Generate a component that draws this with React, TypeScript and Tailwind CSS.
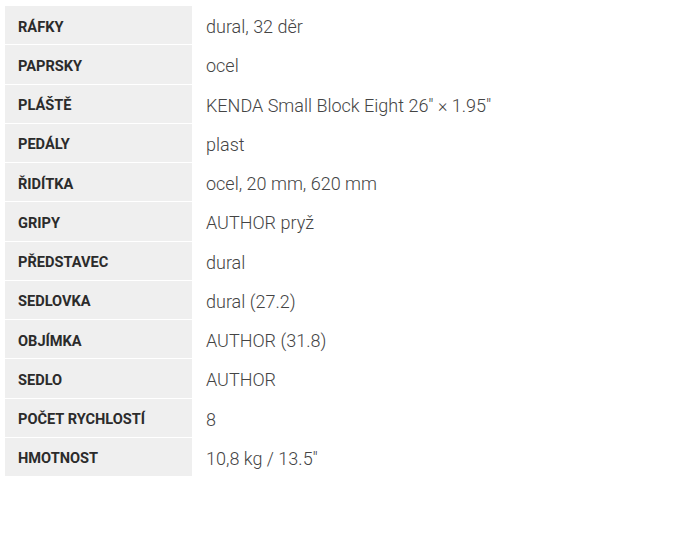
const specs: Array<[string, string]> = [
  ["Ráfky", "dural, 32 děr"],
  ["Paprsky", "ocel"],
  ["Pláště", "KENDA Small Block Eight 26\" × 1.95\""],
  ["Pedály", "plast"],
  ["Řidítka", "ocel, 20 mm, 620 mm"],
  ["Gripy", "AUTHOR pryž"],
  ["Představec", "dural"],
  ["Sedlovka", "dural (27.2)"],
  ["Objímka", "AUTHOR (31.8)"],
  ["Sedlo", "AUTHOR"],
  ["Počet rychlostí", "8"],
  ["Hmotnost", "10,8 kg / 13.5\""],
];

function App() {
  return (
    <div className="min-h-[551px] bg-white pl-[5px] pt-[6px] font-['Roboto',sans-serif]">
      <div className="flex w-[600px] flex-col gap-px">
        {specs.map(([label, value]) => (
          <div key={label} className="flex h-[38.25px] items-center">
            <div className="flex h-full w-[187px] items-center bg-[#efefef] pl-[13px] pt-[5px] text-[14.6px] font-bold uppercase text-[#2b2b2b]">
              {label}
            </div>
            <div className="pl-[14px] pt-[3px] text-[18px] font-light text-[#444]">
              {value}
            </div>
          </div>
        ))}
      </div>
    </div>
  );
}

export default App;
